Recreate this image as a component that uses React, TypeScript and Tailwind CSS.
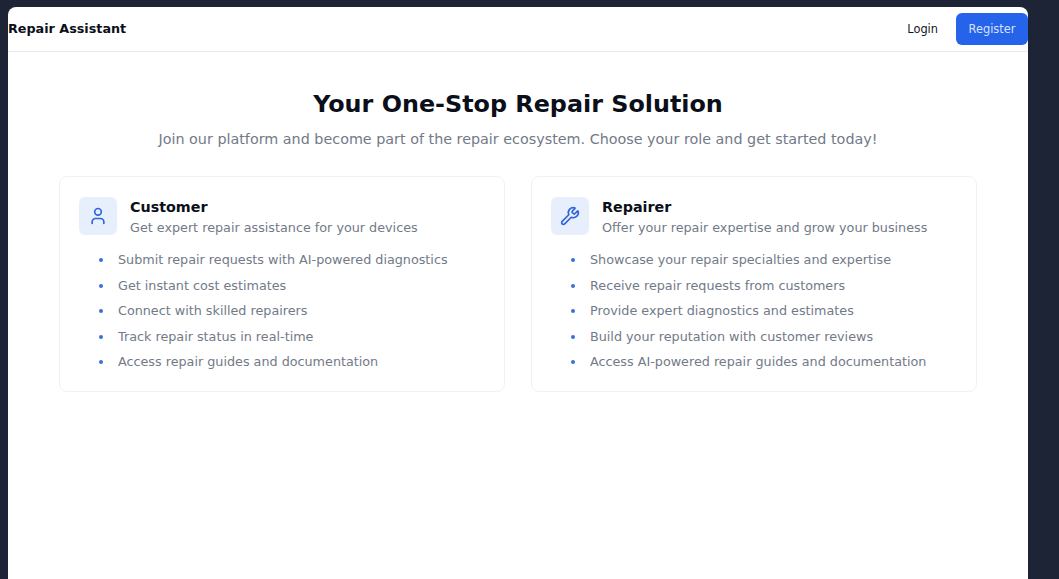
import React from "react";
import { User, Wrench } from "lucide-react";

const font = { fontFamily: '"DejaVu Sans", sans-serif' };

interface RoleCardProps {
  icon: React.ReactNode;
  title: string;
  subtitle: string;
  items: string[];
}

const RoleCard: React.FC<RoleCardProps> = ({ icon, title, subtitle, items }) => {
  return (
    <div className="w-[446px] h-[216px] rounded-lg border border-[#eff1f3] bg-white pt-[20px] pl-[19px]">
      <div className="flex items-start gap-[13px]">
        <div className="flex h-[38px] w-[38px] items-center justify-center rounded-md bg-[#e8effc] text-[#2f66d9]">
          {icon}
        </div>
        <div>
          <h2 className="text-[14.3px] font-bold leading-[21px] text-[#0b0f19]">{title}</h2>
          <p className="text-[12.75px] leading-[20px] text-[#727a88]">{subtitle}</p>
        </div>
      </div>
      {/* Feature list */}
      <ul className="mt-[12px] flex flex-col gap-[5.5px] pl-[20px]">
        {items.map((item) => (
          <li key={item} className="flex h-[20px] items-center text-[12.75px] text-[#727a88]">
            <span className="mr-[15px] h-[4px] w-[4px] rounded-full bg-[#3b6fdc]" />
            {item}
          </li>
        ))}
      </ul>
    </div>
  );
};

export default function App() {
  return (
    <div className="h-[579px] w-[1059px] overflow-hidden bg-[#1c2435] pl-[8px] pt-[7px]" style={font}>
      <div className="h-[600px] w-[1020px] overflow-hidden rounded-t-lg bg-white">
        {/* Top bar */}
        <header className="flex h-[45px] items-center justify-between border-b border-[#e7e9ec]">
          <span className="text-[12.75px] font-bold text-[#0b0f19]">Repair Assistant</span>
          <div className="flex items-center">
            <button className="mr-[18px] pt-[2px] text-[11.4px] text-[#111827]">Login</button>
            <button className="flex h-[32px] w-[72px] items-center justify-center rounded-md bg-[#2563eb] pt-[2px] text-[11.4px] text-[#d6e2fb]">
              Register
            </button>
          </div>
        </header>

        <main className="flex flex-col items-center pt-[37px]">
          <h1 className="text-[23.85px] font-bold leading-[30px] text-[#0b0f19]">Your One-Stop Repair Solution</h1>
          <p className="mt-[10px] text-[14.33px] leading-[20px] text-[#727a88]">
            Join our platform and become part of the repair ecosystem. Choose your role and get started today!
          </p>
          <div className="mt-[27px] flex gap-[26px]">
            <RoleCard
              icon={<User size={20} strokeWidth={2} />}
              title="Customer"
              subtitle="Get expert repair assistance for your devices"
              items={[
                "Submit repair requests with AI-powered diagnostics",
                "Get instant cost estimates",
                "Connect with skilled repairers",
                "Track repair status in real-time",
                "Access repair guides and documentation",
              ]}
            />
            <RoleCard
              icon={<Wrench size={20} strokeWidth={2} />}
              title="Repairer"
              subtitle="Offer your repair expertise and grow your business"
              items={[
                "Showcase your repair specialties and expertise",
                "Receive repair requests from customers",
                "Provide expert diagnostics and estimates",
                "Build your reputation with customer reviews",
                "Access AI-powered repair guides and documentation",
              ]}
            />
          </div>
        </main>
      </div>
    </div>
  );
}
